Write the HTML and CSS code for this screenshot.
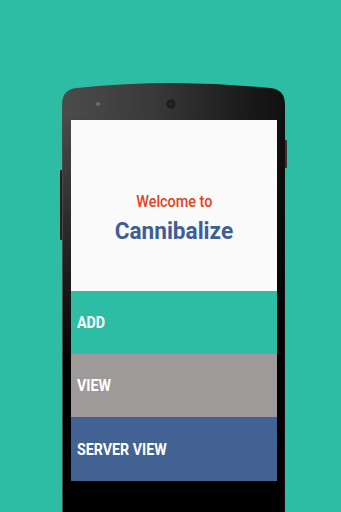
FILE: index.html
```html
<!DOCTYPE html>
<html>
<head>
<meta charset="utf-8">
<link rel="stylesheet" href="styles.css">
</head>
<body>
<div class="stage">
  <div class="btn-left"></div>
  <div class="btn-right"></div>
  <div class="phone">
    <div class="bezel-top">
      <span class="sensor"></span>
      <span class="camera"></span>
      <span class="spacer"></span>
    </div>
    <div class="screen">
      <div class="welcome">
        <div class="welcome-small"><span class="squeeze">Welcome to</span></div>
        <div class="welcome-title"><span class="squeeze-title">Cannibalize</span></div>
      </div>
      <div class="action action-add"><span class="label">ADD</span></div>
      <div class="action action-view"><span class="label">VIEW</span></div>
      <div class="action action-server"><span class="label">SERVER VIEW</span></div>
    </div>
  </div>
</div>
</body>
</html>
```
FILE: styles.css
```css
html, body {
  margin: 0;
  padding: 0;
}
body {
  background: #2dbca4;
  width: 341px;
  height: 512px;
  overflow: hidden;
  font-family: Roboto, "Liberation Sans", sans-serif;
}
.stage {
  position: relative;
  padding-top: 83px;
  padding-left: 62px;
}
.btn-left {
  position: absolute;
  left: 60px;
  top: 170px;
  width: 2px;
  height: 70px;
  background: #1e1e1e;
  border-radius: 1px 0 0 1px;
}
.btn-right {
  position: absolute;
  left: 285px;
  top: 140px;
  width: 2px;
  height: 28px;
  background: #3a2f33;
  border-radius: 0 1px 1px 0;
}
.phone {
  position: relative;
  width: 223px;
  height: 460px;
  background: linear-gradient(to right, #4c4c4c 0%, #3a3a3a 40%, #1c1c1c 80%, #101010 100%);
  clip-path: path('M 0 22 C 0 11, 5 6, 15 5 Q 111.5 -5 208 5 C 218 6, 223 11, 223 22 L 223 460 L 0 460 Z');
  box-sizing: border-box;
}
.phone::after {
  content: "";
  position: absolute;
  left: 1px;
  right: 1px;
  top: 30px;
  bottom: 0;
  background: linear-gradient(to bottom, rgba(0,0,0,0) 0%, #000 60%);
  z-index: 0;
}
.bezel-top {
  position: relative;
  z-index: 1;
  height: 37px;
  display: flex;
  align-items: center;
  justify-content: space-between;
  padding: 0 28px 0 34px;
  box-sizing: border-box;
}
.sensor {
  width: 4px;
  height: 4px;
  border-radius: 50%;
  background: #6a6a80;
  margin-top: 4px;
}
.camera {
  width: 10px;
  height: 10px;
  border-radius: 50%;
  background: radial-gradient(circle at 50% 50%, #2a2a2a 0%, #1a1a1a 50%, #444 100%);
  margin-top: 5px;
  margin-left: 4px;
}
.spacer {
  width: 20px;
}
.screen {
  position: relative;
  z-index: 1;
  margin-left: 9px;
  width: 206px;
  display: flex;
  flex-direction: column;
}
.welcome {
  height: 171px;
  background: #fafafa;
  display: flex;
  flex-direction: column;
  align-items: center;
  padding-top: 72px;
  box-sizing: border-box;
}
.squeeze {
  display: inline-block;
  transform: scaleX(0.9);
  transform-origin: center center;
}
.squeeze-title {
  display: inline-block;
  transform: scaleX(0.94);
  transform-origin: center center;
}
.welcome-small {
  color: #e5401c;
  font-size: 16px;
  font-weight: 500;
  line-height: 20px;
}
.welcome-title {
  color: #3e5f94;
  font-size: 24px;
  font-weight: 700;
  line-height: 30px;
  margin-top: 4px;
}
.action {
  display: flex;
  align-items: center;
  padding-left: 6px;
  color: #fff;
  font-size: 16px;
  font-weight: 700;
  height: 63px;
}
.label {
  display: inline-block;
  transform: scaleX(0.89);
  transform-origin: left center;
}
.action-add {
  background: #2dbca4;
}
.action-view {
  background: #9e9a99;
}
.action-server {
  background: #416293;
  height: 64px;
}
```
